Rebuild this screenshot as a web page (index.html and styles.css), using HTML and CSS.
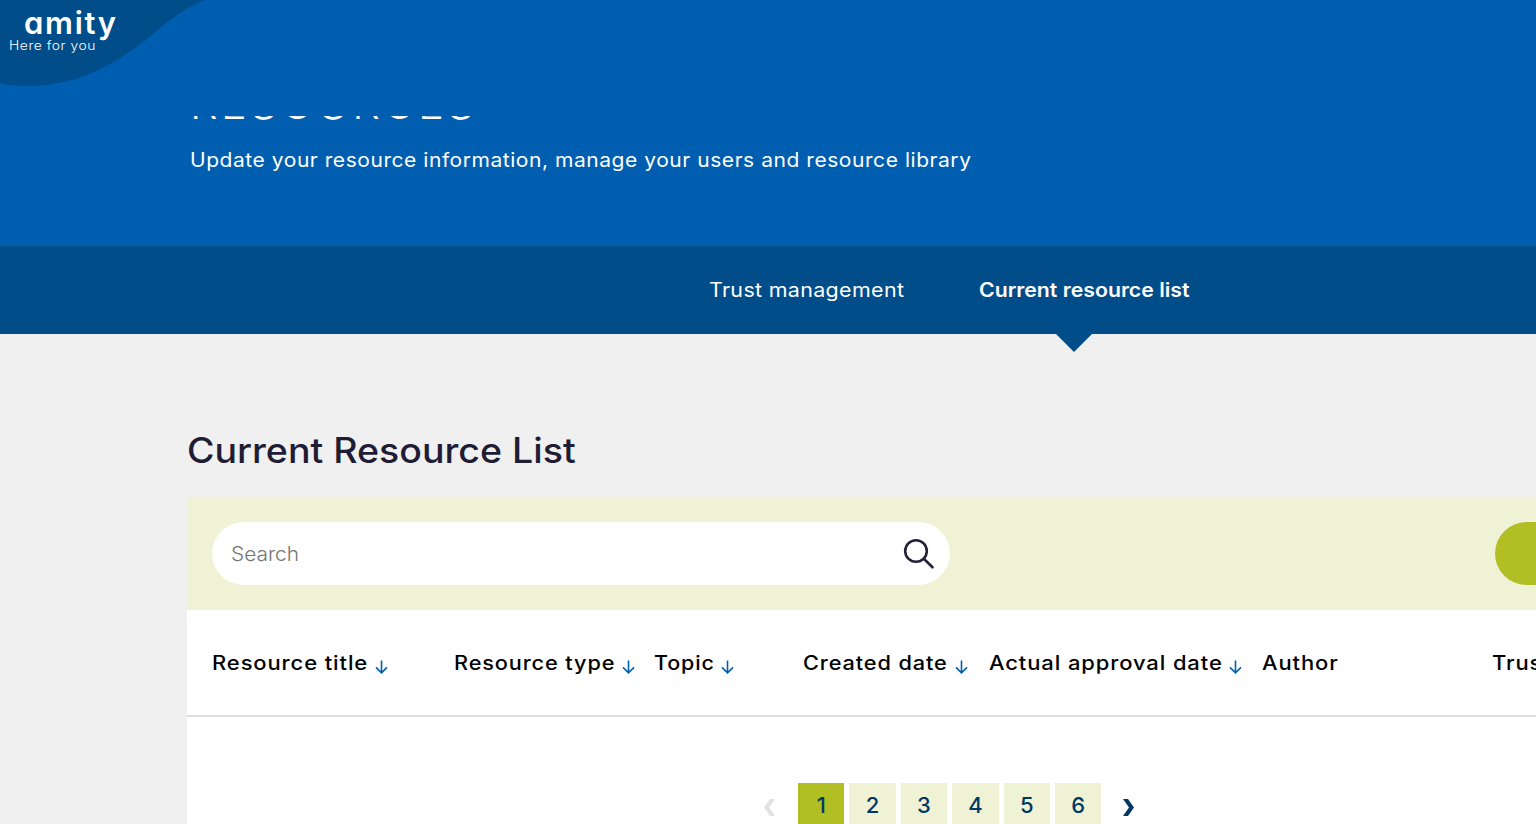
FILE: index.html
```html
<!DOCTYPE html>
<html lang="en">
<head>
<meta charset="utf-8">
<title>Current Resource List</title>
<link rel="stylesheet" href="styles.css">
</head>
<body>
<svg width="0" height="0" class="defs" aria-hidden="true">
  <symbol id="sort" viewBox="0 0 13 14"><path d="M6.5 .5V13M1 7.4L6.5 12.8L12 7.4" fill="none" stroke="#005eb0" stroke-width="1.6"/></symbol>
</svg>
<header class="topbar">
  <svg class="blob" width="206" height="88" viewBox="0 0 206 88"><path d="M0 0H205C188 7 173 17 159 29C121 62 80 86 27 86C16 86 7 85 0 83Z" fill="#004d8a"/></svg>
  <div class="brand"><span class="brand-name">amity</span><span class="brand-tag">Here for you</span></div>
</header>
<section class="hero">
  <h1 class="hero-title">RESOURCES</h1>
  <p class="hero-text">Update your resource information, manage your users and resource library</p>
</section>
<nav class="tabs">
  <a class="tab"><span class="tab-label">Trust management</span></a>
  <a class="tab active"><span class="tab-label">Current resource list</span></a>
</nav>
<main class="content">
  <h2 class="title">Current Resource List</h2>
  <div class="panel">
    <div class="toolbar">
      <label class="search">
        <input class="search-input" type="text" placeholder="Search">
        <svg class="search-icon" width="32" height="32" viewBox="0 0 32 32"><circle cx="13" cy="13" r="10.8" fill="none" stroke="#23213a" stroke-width="2.6"/><path d="M20.8 20.8L29.5 29.3" stroke="#23213a" stroke-width="2.6" stroke-linecap="round"/></svg>
      </label>
      <button class="action" aria-label="Add resource"></button>
    </div>
    <div class="table-head">
      <div class="th"><span class="label w1">Resource title</span><svg class="sort"><use href="#sort"/></svg></div>
      <div class="th"><span class="label w2">Resource type</span><svg class="sort"><use href="#sort"/></svg></div>
      <div class="th"><span class="label w3">Topic</span><svg class="sort"><use href="#sort"/></svg></div>
      <div class="th"><span class="label w4">Created date</span><svg class="sort"><use href="#sort"/></svg></div>
      <div class="th"><span class="label w5">Actual approval date</span><svg class="sort"><use href="#sort"/></svg></div>
      <div class="th"><span class="label">Author</span></div>
      <div class="th"><span class="label">Trust</span></div>
    </div>
    <div class="pager">
      <svg class="chev prev" width="11" height="17" viewBox="0 0 11 17"><path d="M6 0H11L5 8.5L11 17H6L0 8.5Z" fill="#e0e2e4"/></svg>
      <a class="page current">1</a><a class="page">2</a><a class="page">3</a><a class="page">4</a><a class="page">5</a><a class="page">6</a>
      <svg class="chev next" width="11" height="17" viewBox="0 0 11 17"><path d="M0 0H5L11 8.5L5 17H0L6 8.5Z" fill="#003865"/></svg>
    </div>
  </div>
</main>
</body>
</html>
```
FILE: styles.css
```css
* { box-sizing: border-box; }
html, body { margin: 0; height: 824px; overflow: hidden; }
body { background: #f0f0f0; font-family: Inter, "Open Sans", sans-serif; color: #000; }
.defs { position: absolute; }
.topbar { position: absolute; z-index: 2; top: 0; left: 0; width: 100%; height: 116px; background: #005eb0; }
.blob { position: absolute; top: 0; left: 0; }
.brand { position: relative; display: flex; flex-direction: column; color: #fff; white-space: nowrap; }
.brand-name { margin-left: 24px; margin-top: 4px; height: 34px; font-size: 31px; line-height: 38px; font-weight: 600; letter-spacing: 1.7px; font-feature-settings: "cv11"; }
.brand-tag { margin-left: 9px; font-size: 12.6px; line-height: 15px; font-weight: 300; letter-spacing: .5px; transform: scaleX(1.1); transform-origin: 0 0; }
.hero { height: 246px; padding: 77px 0 0 190px; background: #005eb0; color: #fff; }
.hero-title { margin: 0; height: 69px; font-size: 42px; line-height: 53px; font-weight: 350; letter-spacing: 3px; transform: scaleX(1.04); transform-origin: 0 0; }
.hero-text { margin: 0; width: 730px; font-size: 19.5px; line-height: 28px; letter-spacing: .5px; white-space: nowrap; transform: scaleX(1.078); transform-origin: 0 0; }
.tabs { display: flex; gap: 75px; height: 88px; padding-left: 709px; background: #004d8a; color: #fff; font-size: 19.5px; line-height: 88px; white-space: nowrap; }
.tab { position: relative; width: 195px; }
.tab-label { display: inline-block; letter-spacing: .3px; transform: scaleX(1.1); transform-origin: 0 0; }
.tab.active { width: 211px; font-weight: 600; }
.active .tab-label { letter-spacing: 0; transform: scaleX(1.09); }
.tab.active::after { content: ""; position: absolute; top: 88px; left: 77px; border: 18px solid transparent; border-top-color: #004d8a; border-bottom: 0; }
.content { padding: 93px 0 0 187px; width: 100%; }
.title { margin: 0; height: 70px; font-size: 35px; line-height: 47px; font-weight: 500; color: #1f1d35; white-space: nowrap; transform: scaleX(1.072); transform-origin: 0 0; }
.panel { height: 328px; overflow: hidden; background: #fff; }
.toolbar { display: flex; gap: 545px; height: 113px; padding: 25px; background: #eff2d4; }
.search { display: flex; flex: none; align-items: center; width: 738px; height: 63px; padding: 0 15px 0 19px; border-radius: 32px; background: #fff; }
.search-input { flex: none; width: 620px; margin-right: 52px; padding: 0; border: 0; outline: 0; background: none; font: 300 19.5px Inter, sans-serif; transform: scaleX(1.07); transform-origin: 0 0; }
.search-input::placeholder { color: #757575; }
.action { flex: none; width: 260px; height: 63px; border: 0; border-radius: 32px; background: #b1bf25; }
.table-head { display: grid; grid-template-columns: 242px 200px 149px 185.5px 273.5px 230px 200px; height: 107px; padding-left: 25px; border-bottom: 2px solid #ddd; }
.th { display: flex; align-items: flex-start; padding-top: 39px; font-size: 19.5px; line-height: 28px; font-weight: 500; letter-spacing: .8px; white-space: nowrap; }
.label { flex: none; transform: scaleX(1.126); transform-origin: 0 0; }
.sort { flex: none; width: 13px; height: 14px; margin: 11px 0 0 6px; }
.w1 { width: 157px; }
.w2 { width: 161.5px; transform: scaleX(1.112); }
.w3 { width: 61px; transform: scaleX(1.1); }
.w4 { width: 146px; transform: scaleX(1.113); }
.w5 { width: 234px; }
.pager { display: flex; align-items: flex-start; gap: 5px; padding: 66px 0 0 577px; }
.page { width: 46.4px; height: 46px; background: #eff2d4; color: #003865; font-size: 22px; line-height: 45px; font-weight: 500; text-align: center; }
.page.current { background: #b1bf25; }
.chev { margin-top: 16px; }
.prev { margin-right: 18px; }
.next { margin-left: 17px; }
```
